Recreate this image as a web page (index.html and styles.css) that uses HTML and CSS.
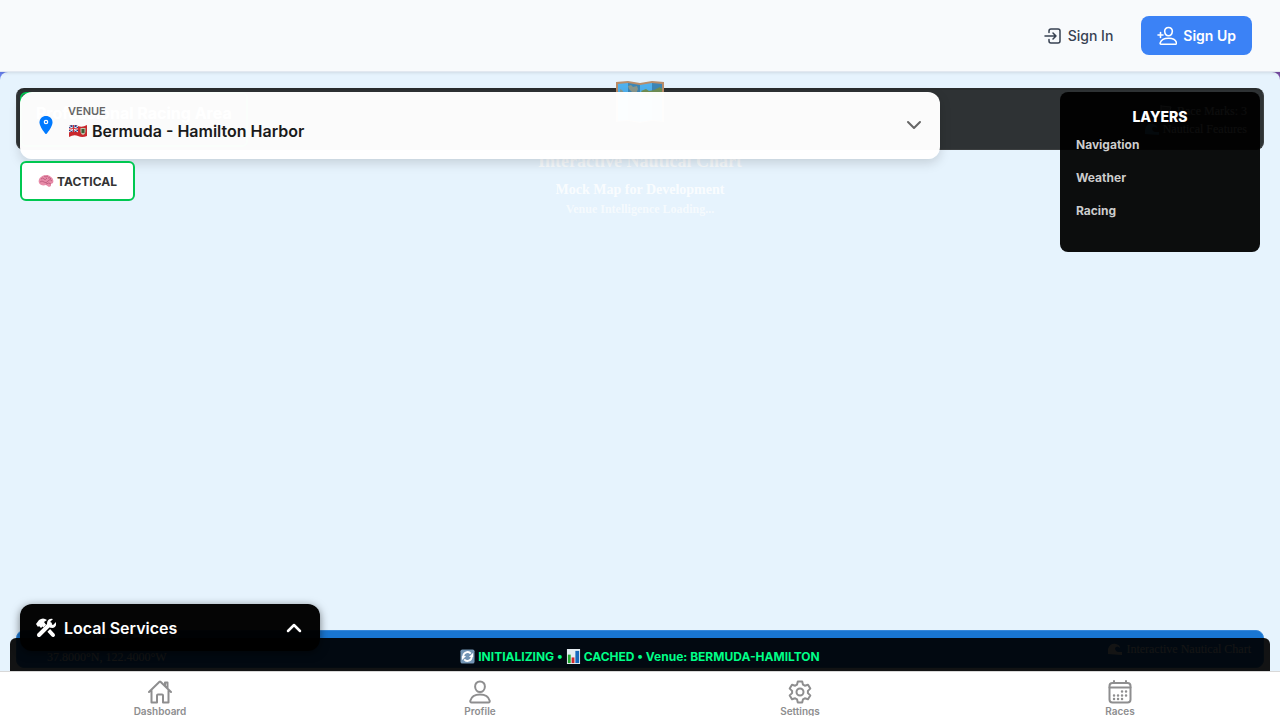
FILE: index.html
```html
<!DOCTYPE html>
<html lang="en">
<head>
<meta charset="utf-8">
<meta name="viewport" content="width=device-width, initial-scale=1">
<title>Bermuda - Hamilton Harbor</title>
<link rel="stylesheet" href="styles.css">
</head>
<body>
<div class="app">
  <header class="topbar">
    <button class="btn btn-plain" type="button">
      <svg class="icon-sm" viewBox="0 0 18 18" fill="none" stroke="currentColor" stroke-width="1.500" stroke-linecap="round" stroke-linejoin="round"><path d="M5 5.500V4a2 2 0 0 1 2-2h7a2 2 0 0 1 2 2v10a2 2 0 0 1-2 2H7a2 2 0 0 1-2-2v-1.500M1 9h11M9 6l3 3-3 3"/></svg>
      Sign In
    </button>
    <button class="btn btn-primary" type="button">
      <svg class="icon-md" viewBox="0 0 20 20" fill="none" stroke="currentColor" stroke-width="1.600" stroke-linecap="round" stroke-linejoin="round"><path d="M11.500 1.500c2.300 0 4 1.700 3.800 4-.2 2.300-1.800 4.200-3.800 4.200S7.900 7.800 7.700 5.500c-.2-2.300 1.500-4 3.800-4zM4 18.200c-.7 0-1-.6-.8-1.300.9-3 4.300-4.700 8.300-4.700s7.400 1.700 8 4.700c.1.700-.2 1.300-.9 1.300zM3.500 6.500v5M1 9h5"/></svg>
      Sign Up
    </button>
  </header>

  <main class="stage">
    <section class="map">
      <div class="map-head">
        <div class="map-title">Professional Racing Area</div>
        <div class="map-stats">
          <span class="stat"><svg class="stat-icon" viewBox="0 0 14 14"><path d="M2 1v12M2 2l10 1-2 6-8-1" stroke="#ddd" fill="#777"/></svg>Race Marks: 3</span>
          <span class="stat"><svg class="stat-icon" viewBox="0 0 14 14"><path d="M0 12V7q2-6 8-5 4 1 4 4-3-3-5 0 0 3 3 4h4v3z" fill="#4ba7dd"/></svg>Nautical Features</span>
        </div>
      </div>
      <div class="map-intro">
        <svg class="map-glyph" viewBox="0 0 48 42"><path d="M0 1l12-1 12 2 12-2 12 1v40l-12-1-12 2-12-2-12 1z" fill="#b98d69"/><path d="M2 3l10-1v37L2 40zM24 4l12-2v37l-12 2z" fill="#4fb1ee"/><path d="M12 2l12 2v37l-12-2zM36 2l10 1v37l-10-1z" fill="#3d86b5"/><path d="M12 5l3-1 2 2 4-1 1 3-2 5-4-2-3-3zM4 8l2 1 3 4-1 6-4-6z" fill="#8a978c"/><path d="M25 10l5-2 3 2 5-1 6-3 2 2v6l-7 3-4-4-5 4z" fill="#6f8f55"/></svg>
        <div class="intro-title">Interactive Nautical Chart</div>
        <div class="intro-sub">Mock Map for Development</div>
        <div class="intro-note">Venue Intelligence Loading...</div>
      </div>
      <div class="map-foot">
        <div class="map-place">
          <b class="place-name">Bermuda Harbor</b>
          <span>37.8000°N, 122.4000°W</span>
        </div>
        <span class="stat"><svg class="stat-icon" viewBox="0 0 14 14"><path d="M0 12V7q2-6 8-5 4 1 4 4-3-3-5 0 0 3 3 4h4v3z" fill="#fff"/></svg>Interactive Nautical Chart</span>
      </div>
    </section>

    <div class="overlay">
      <div class="left-tools">
        <button class="venue" type="button">
          <svg class="pin" viewBox="0 0 14 20"><path d="M7 0C3.400 0 .500 2.700.500 6.200.500 10.500 5 16 6.400 17.700q.6.700 1.200 0C9 16 13.500 10.500 13.500 6.200 13.500 2.700 10.600 0 7 0z" fill="#007aff"/><circle cx="7" cy="6" r="1.700" fill="none" stroke="#fff" stroke-width="1.200"/></svg>
          <span class="venue-text">
            <span class="venue-label">VENUE</span>
            <span class="venue-name">
              <svg class="flag" viewBox="0 0 20 14"><path d="M1 2q5-2 9 0t9-1v11q-5 2-9 0t-9 1z" fill="#c9282d"/><path d="M1 2q5-2 9 0v6q-5-1-9 0z" fill="#263e87"/><path d="M1 2l9 6M10 2L1 8" stroke="#fff" stroke-width="1"/><path d="M5.500 1v7M1 5q5-1 9 0" stroke="#fff" stroke-width="1.800" fill="none"/><path d="M5.500 1v7M1 5q5-1 9 0" stroke="#d42d32" fill="none"/><path d="M12.500 4h5v4q-.5 2.500-2.500 3-2-.5-2.500-3z" fill="#b9c2a8"/><path d="M13.500 5h3v4h-3z" fill="#3f5c35"/></svg>
              Bermuda - Hamilton Harbor
            </span>
          </span>
          <svg class="chevron" viewBox="0 0 20 20" fill="none" stroke="#666" stroke-width="2" stroke-linecap="round" stroke-linejoin="round"><path d="M4 6l6 6 6-6"/></svg>
        </button>
        <button class="tactical" type="button">
          <svg class="brain" viewBox="0 0 16 14"><path d="M1 9C0 7 1 4 3 3 5 1 10 0 13 3c2 1 3 4 2 6l-2 1v2l-2 1-3-2C5 12 2 11 1 9z" fill="#e78ba8"/><path d="M3 5q2-2 3 0t3-1M6 2q2 2 4 0M2 8q2-2 4 0t4-1 4 0M10 4q2-1 3 1M8 10q3-2 5 0" stroke="#b95579" stroke-width=".8" fill="none"/></svg>
          TACTICAL
        </button>
      </div>
      <aside class="layers">
        <h2 class="layers-title">LAYERS</h2>
        <button class="layer" type="button">Navigation</button>
        <button class="layer" type="button">Weather</button>
        <button class="layer" type="button">Racing</button>
      </aside>
    </div>

    <div class="status">
      <svg class="status-icon" viewBox="0 0 16 16"><rect x=".5" y=".5" width="15" height="15" rx="2" fill="#7395b4"/><path d="M3.500 7.500a4.500 4.500 0 0 1 8-2.500M12.500 8.500a4.500 4.500 0 0 1-8 2.500" stroke="#fff" stroke-width="2" fill="none"/><path d="M14 4v4.500H9.500zM2 12V7.500h4.500z" fill="#fff"/></svg>
      INITIALIZING •
      <svg class="status-icon" viewBox="0 0 16 16"><path d="M1 0h14v16H1z" fill="#e5edf2"/><path d="M2 6h3v9H2z" fill="#1fa62f"/><path d="M6 9h3v6H6z" fill="#d3272c"/><path d="M10 2h4v13h-4z" fill="#1768bd"/></svg>
      CACHED • Venue: BERMUDA-HAMILTON
    </div>
    <button class="services" type="button">
      <svg class="tools" viewBox="0 0 20 20"><path d="M5 4l12 13" stroke="#fff" stroke-width="4" stroke-linecap="round"/><path d="M0 6l3-4q4-3 8 0L8 4l1 2-4 4-2-2-1 1z" fill="#fff"/><path d="M5 16L15 6" stroke="#000" stroke-width="6"/><path d="M3 17L14 6" stroke="#fff" stroke-width="4" stroke-linecap="round"/><path d="M17 1l-3 3 1 2 2 1 3-3q1 5-3 6-6 0-6-5 1-5 6-4z" fill="#fff"/></svg>
      <span class="services-label">Local Services</span>
      <svg class="chevron" viewBox="0 0 20 20" fill="none" stroke="#fff" stroke-width="2.500" stroke-linecap="round" stroke-linejoin="round"><path d="M4 13l6-6 6 6"/></svg>
    </button>
  </main>

  <nav class="tabs">
    <a class="tab" href="#dashboard">
      <svg class="tab-icon" viewBox="0 0 24 24" fill="none" stroke="currentColor" stroke-width="2" stroke-linecap="round" stroke-linejoin="round"><path d="M3.500 10v12.500H9V15.500q0-1 1-1h4q1 0 1 1v7h5.500V10M1 12L11.500 1.800q.5-.4 1 0L23 12M17 6V2.500h2.500V8"/></svg>
      <span>Dashboard</span>
    </a>
    <a class="tab" href="#profile">
      <svg class="tab-icon" viewBox="0 0 24 24" fill="none" stroke="currentColor" stroke-width="2" stroke-linecap="round" stroke-linejoin="round"><path d="M12 1.500c3 0 5.100 2.200 4.900 5.200-.2 3-2.300 5.300-4.900 5.300s-4.700-2.300-4.900-5.300C6.900 3.700 9 1.500 12 1.500zM12 14.500c-4.300 0-8.500 2-9.700 6.200-.2.900.2 1.800 1.200 1.800h17c1 0 1.400-.9 1.200-1.800-1.200-4.200-5.400-6.200-9.700-6.200z"/></svg>
      <span>Profile</span>
    </a>
    <a class="tab" href="#settings">
      <svg class="tab-icon" viewBox="0 0 24 24" fill="none" stroke="currentColor" stroke-width="2" stroke-linejoin="round"><circle cx="12" cy="12" r="3.500"/><path d="M9.800 1.500h4.400l.8 3.200 1.800 1 3.200-1 2.300 3.900-2.400 2.300v2.200l2.400 2.300-2.300 3.900-3.200-1-1.800 1-.8 3.200H9.800L9 19.300l-1.800-1-3.200 1-2.300-3.900 2.400-2.300v-2.200L1.700 8.600 4 4.700l3.200 1 1.800-1z"/></svg>
      <span>Settings</span>
    </a>
    <a class="tab" href="#races">
      <svg class="tab-icon" viewBox="0 0 24 24" fill="none" stroke="currentColor" stroke-width="2" stroke-linecap="round"><rect x="1.500" y="3" width="21" height="19.500" rx="3"/><path d="M6 1v2M18 1v2M1.500 7.500h21"/><path d="M14 11.500h.1M18 11.500h.1M6 15.500h.1M10 15.500h.1M14 15.500h.1M18 15.500h.1M6 19h.1M10 19h.1M14 19h.1" stroke-width="2.400"/></svg>
      <span>Races</span>
    </a>
  </nav>
</div>
</body>
</html>
```

FILE: styles.css
```css
* { box-sizing: border-box; }
body { margin: 0; font-family: Inter, "Liberation Sans", sans-serif; background: #fff; }
button { font-family: inherit; cursor: pointer; }
svg { display: block; flex: none; }

.app { display: flex; flex-direction: column; height: 100vh; }
.topbar {
  display: flex; justify-content: flex-end; align-items: center; gap: 12px;
  flex: none; height: 72px; padding: 0 28px;
  background: #f8fafc; border-bottom: 1px solid #e2e8f0;
  box-shadow: 0 1px 3px rgba(0, 0, 0, .1); position: relative; z-index: 1;
}
.btn {
  display: flex; align-items: center; height: 39px; padding: 0 16px;
  border: 0; border-radius: 8px; font-size: 14px; font-weight: 500;
}
.btn-plain { gap: 6px; background: transparent; color: #374151; }
.btn-primary { gap: 6px; background: #3b82f6; color: #fff; font-weight: 600; }
.icon-sm { width: 18px; height: 18px; }
.icon-md { width: 20px; height: 20px; }

.stage {
  position: relative; flex: 1; min-height: 0; overflow: hidden;
  background: linear-gradient(90deg, #667eea, #764ba2);
}
.map {
  display: flex; flex-direction: column; height: 100%; padding: 16px 16px 0;
  border-radius: 8px 8px 0 0; background: #e6f3fd;
  font-family: "Liberation Serif", serif;
}
.map-head {
  display: flex; justify-content: space-between; align-items: center;
  height: 62px; padding: 0 16px 0 3px; border: 1px solid #3c3f40; border-top: 2px solid #292c2d;
  border-radius: 8px; background: #2e3234; color: #fff;
}
.map-title {
  height: 55px; padding: 9px 14px; border: 2px solid #00c851; border-radius: 6px;
  font: 700 16px/20px Inter, sans-serif;
}
.map-stats { display: flex; flex-direction: column; align-items: flex-end; font-size: 12px; line-height: 18px; }
.stat { display: flex; align-items: center; gap: 4px; }
.stat-icon { width: 14px; height: 14px; }
.map-intro {
  position: absolute; top: 9px; left: 0; right: 0;
  display: flex; flex-direction: column; align-items: center;
  color: rgba(255, 255, 255, .8); font-weight: 700;
}
.map-glyph { width: 48px; height: 42px; }
.intro-title { margin-top: 26px; font-size: 18px; line-height: 24px; }
.intro-sub { margin-top: 8px; font-size: 14px; line-height: 18px; }
.intro-note { margin-top: 1px; font-size: 12px; line-height: 18px; opacity: .8; }
.map-foot {
  display: flex; justify-content: space-between; align-items: center;
  height: 38px; margin: auto 0 3px; padding: 0 12px;
  border: 1px solid #3587da; border-radius: 8px; background: #1976d2; color: #fff; font-size: 12px;
}
.map-place { display: flex; flex-direction: column; padding-left: 18px; line-height: 16px; margin-bottom: 8px; }
.place-name { padding-left: 20px; font: 700 14px/24px Inter, sans-serif; }

.overlay {
  position: absolute; top: 20px; left: 20px; right: 20px;
  display: flex; justify-content: space-between; align-items: flex-start; gap: 120px;
}
.left-tools { display: flex; flex: 1; flex-direction: column; align-items: flex-start; gap: 2px; }
.venue {
  display: flex; align-items: center; gap: 12px; width: 100%; height: 67px; padding: 0 16px;
  border: 0; border-radius: 12px; background: rgba(255, 255, 255, .98);
  box-shadow: 0 4px 12px rgba(0, 0, 0, .15); text-align: left;
}
.pin { width: 20px; height: 20px; }
.venue-text { display: flex; flex: 1; flex-direction: column; padding-bottom: 6px; }
.venue-label { color: #666; font-size: 11px; font-weight: 600; line-height: 16px; }
.venue-name {
  display: flex; align-items: center; gap: 4px;
  color: #1a1a1a; font-size: 16px; font-weight: 600; line-height: 24px;
}
.flag { width: 20px; height: 14px; }
.chevron { width: 20px; height: 20px; }
.tactical {
  display: flex; align-items: center; gap: 3px; height: 40px; padding: 0 16px;
  border: 2px solid #00c851; border-radius: 6px; background: #fff;
  color: #333; font-size: 12px; font-weight: 700;
}
.brain { width: 16px; height: 14px; }
.layers {
  display: flex; flex-direction: column; width: 200px; height: 160px; padding: 16px;
  border-radius: 8px; background: rgba(0, 0, 0, .95);
}
.layers-title { margin: 0 0 8px; color: #fff; font-size: 14px; line-height: 18px; font-weight: 800; text-align: center; }
.layer {
  height: 21px; margin-bottom: 12px; padding: 0; border: 0; background: transparent;
  color: #ccc; font-size: 12px; font-weight: 700; text-align: left;
}

.status {
  position: absolute; left: 10px; right: 10px; bottom: 0;
  display: flex; justify-content: center; align-items: center; gap: 3px;
  height: 33px; padding-top: 4px; border-radius: 6px 6px 0 0; background: rgba(0, 0, 0, .92);
  color: #00ff88; font-size: 12px; font-weight: 700;
}
.status-icon { width: 15px; height: 15px; }
.services {
  position: absolute; left: 20px; bottom: 20px;
  display: flex; align-items: center; width: 300px; height: 47px; padding: 0 16px;
  border: 0; border-radius: 12px; background: rgba(0, 0, 0, .98);
  box-shadow: 0 2px 8px rgba(0, 0, 0, .5); color: #fff; font-size: 16px; font-weight: 600;
}
.tools { width: 20px; height: 20px; margin-right: 8px; }
.services-label { flex: 1; text-align: left; }

.tabs { display: flex; flex: none; height: 49px; border-top: 1px solid #d8d8d8; background: #fff; }
.tab {
  display: flex; flex: 1; flex-direction: column; align-items: center;
  height: 44px; padding-top: 8px; overflow: hidden;
  color: #8e8e8f; font-size: 10px; font-weight: 600; line-height: 14px; text-decoration: none;
}
.tab-icon { width: 24px; height: 24px; }
```
